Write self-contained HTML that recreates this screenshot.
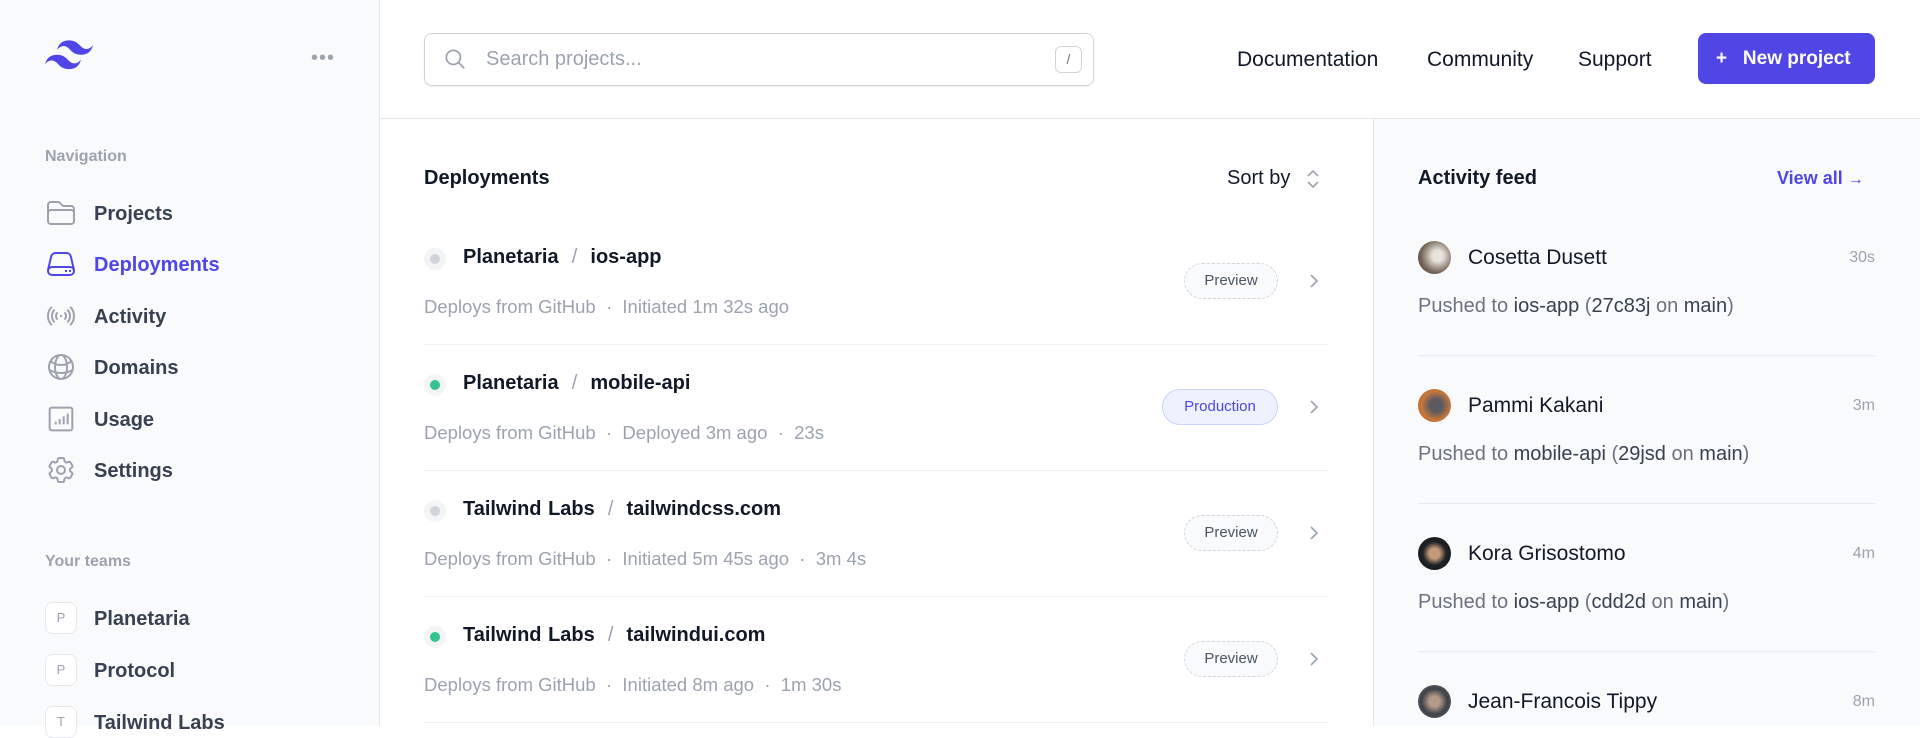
<!DOCTYPE html>
<html><head><meta charset="utf-8"><style>
*{box-sizing:border-box;margin:0;padding:0}
body{width:1920px;height:726px;overflow:hidden;font-family:"Liberation Sans",sans-serif;background:#fff;color:#111827;position:relative}
.a{position:absolute;white-space:nowrap}
.side{position:absolute;left:0;top:0;width:380px;height:726px;background:#f9fafb;border-right:1px solid #e5e7eb}
.lbl{font-size:16px;color:#9ca3af;font-weight:600}
.nav{font-size:20px;font-weight:700;color:#374151;line-height:24px}
.ic{position:absolute;left:45px;width:32px;height:32px}
.team{position:absolute;left:45px;width:32px;height:32px;border:1px solid #e5e7eb;border-radius:8px;background:#fff;font-size:13px;color:#9ca3af;text-align:center;line-height:30px}
.rname{font-size:20px;font-weight:700;color:#111827;word-spacing:1px}
.sub{font-size:18.5px;color:#9ca3af}
.dot{position:absolute;width:22px;height:22px;border-radius:50%;background:#f3f4f6}
.dot i{position:absolute;left:6px;top:6px;width:10px;height:10px;border-radius:50%}
.badge{position:absolute;height:36px;border-radius:18px;font-size:15px;line-height:34px;text-align:center}
.pv{border:1px dashed #d1d5db;color:#4b5563;background:#f9fafb}
.pd{border:1px solid #c7d2fe;background:#eef2ff;color:#4f46e5}
.hr{position:absolute;height:1px;background:#f0f1f3}
.av{position:absolute;left:1418px;width:33px;height:33px;border-radius:50%}
.fn{font-size:21px;color:#111827}
.ft{font-size:20px;color:#6b7280}
.ft b{font-weight:400;color:#374151}
.tm{font-size:16px;color:#9ca3af;right:45px}
.hl{font-size:21px;color:#111827;top:48px}
</style></head><body>
<div class="side">
<svg class="a" style="left:45px;top:40px" width="48" height="30" viewBox="0 0 54 33"><path fill="#4f46e5" d="M27 0c-7.2 0-11.7 3.6-13.5 10.8 2.7-3.6 5.850-4.95 9.45-4.05 2.054.513 3.522 2.004 5.147 3.653C30.744 13.09 33.808 16.2 40.5 16.2c7.2 0 11.7-3.6 13.5-10.8-2.7 3.6-5.85 4.95-9.45 4.05-2.054-.513-3.522-2.004-5.147-3.653C36.756 3.11 33.692 0 27 0zM13.5 16.2C6.3 16.2 1.8 19.8 0 27c2.7-3.6 5.85-4.95 9.45-4.05 2.054.514 3.522 2.004 5.147 3.653C17.244 29.290 20.308 32.4 27 32.4c7.2 0 11.7-3.6 13.5-10.8-2.7 3.6-5.85 4.95-9.45 4.05-2.054-.513-3.522-2.004-5.147-3.653C23.256 19.31 20.192 16.2 13.5 16.2z"/></svg>
<div class="a" style="left:311px;top:56px;color:#9ca3af;font-size:20px;letter-spacing:1px;line-height:4px">•••</div>
<div class="a lbl" style="left:45px;top:148px">Navigation</div>
<svg class="ic" style="top:197px" viewBox="0 0 24 24" fill="none" stroke="#9ca3af" stroke-width="1.5"><path d="M2.25 12.75V12A2.25 2.25 0 014.5 9.75h15A2.25 2.25 0 0121.75 12v.75m-8.690-6.44l-2.12-2.12a1.5 1.5 0 00-1.061-.44H4.5A2.25 2.25 0 002.25 6v12a2.25 2.25 0 002.25 2.25h15A2.25 2.25 0 0021.75 18V9a2.25 2.25 0 00-2.25-2.25h-5.379a1.5 1.5 0 01-1.06-.44z"/></svg>
<div class="a nav" style="left:94px;top:202px">Projects</div>
<svg class="ic" style="top:248px" viewBox="0 0 24 24" fill="none" stroke="#4f46e5" stroke-width="1.5"><path d="M21.75 17.25v-.228a4.5 4.5 0 00-.12-1.030l-2.268-9.64a3.375 3.375 0 00-3.285-2.602H7.923a3.375 3.375 0 00-3.285 2.602l-2.268 9.64a4.5 4.5 0 00-.12 1.03v.228m19.5 0a3 3 0 01-3 3H5.25a3 3 0 01-3-3m19.5 0a3 3 0 00-3-3H5.25a3 3 0 00-3 3m16.5 0h.008v.008h-.008v-.008zm-3 0h.008v.008h-.008v-.008z"/></svg>
<div class="a nav" style="left:94px;top:253px;color:#4f46e5">Deployments</div>
<svg class="ic" style="top:300px" viewBox="0 0 24 24" fill="none" stroke="#9ca3af" stroke-width="1.5"><path d="M9.348 14.651a3.75 3.75 0 010-5.303m5.304 0a3.75 3.75 0 010 5.303m-7.425 2.122a6.75 6.75 0 010-9.546m9.546 0a6.75 6.75 0 010 9.546M5.106 18.894c-3.808-3.808-3.808-9.98 0-13.789m13.788 0c3.808 3.808 3.808 9.981 0 13.79M12 12h.008v.007H12V12z"/></svg>
<div class="a nav" style="left:94px;top:305px">Activity</div>
<svg class="ic" style="top:351px" viewBox="0 0 24 24" fill="none" stroke="#9ca3af" stroke-width="1.5"><path d="M12 21a9.004 9.004 0 008.716-6.747M12 21a9.004 9.004 0 01-8.716-6.747M12 21c2.485 0 4.5-4.03 4.5-9S14.485 3 12 3m0 18c-2.485 0-4.5-4.03-4.5-9S9.515 3 12 3m0 0a8.997 8.997 0 017.843 4.582M12 3a8.997 8.997 0 00-7.843 4.582m15.686 0A11.953 11.953 0 0112 10.5c-2.998 0-5.740-1.1-7.843-2.918m15.686 0A8.959 8.959 0 0121 12c0 .778-.099 1.533-.284 2.253m0 0A17.919 17.919 0 0112 16.5c-3.162 0-6.133-.815-8.716-2.247m0 0A9.015 9.015 0 013 12c0-1.605.42-3.113 1.157-4.418"/></svg>
<div class="a nav" style="left:94px;top:356px">Domains</div>
<svg class="ic" style="top:403px" viewBox="0 0 24 24" fill="none" stroke="#9ca3af" stroke-width="1.5"><rect x="3.5" y="3.5" width="17" height="17" rx="1.5"/><path d="M8 16v-2M11 16v-4M14 16v-6M17 16V8"/></svg>
<div class="a nav" style="left:94px;top:408px">Usage</div>
<svg class="ic" style="top:454px" viewBox="0 0 24 24" fill="none" stroke="#9ca3af" stroke-width="1.5"><path d="M9.594 3.94c.09-.542.56-.94 1.11-.94h2.593c.55 0 1.02.398 1.11.94l.213 1.281c.063.374.313.686.645.87.074.04.147.083.22.127.324.196.72.257 1.075.124l1.217-.456a1.125 1.125 0 011.37.49l1.296 2.247a1.125 1.125 0 01-.26 1.431l-1.003.827c-.293.24-.438.613-.431.992a6.759 6.759 0 010 .255c-.007.378.138.75.43.99l1.005.828c.424.35.534.954.26 1.43l-1.298 2.247a1.125 1.125 0 01-1.369.491l-1.217-.456c-.355-.133-.75-.072-1.076.124a6.57 6.57 0 01-.22.128c-.331.183-.581.495-.644.869l-.213 1.28c-.09.543-.56.941-1.11.941h-2.594c-.55 0-1.02-.398-1.11-.94l-.213-1.281c-.062-.374-.312-.686-.644-.87a6.52 6.52 0 01-.22-.127c-.325-.196-.72-.257-1.076-.124l-1.217.456a1.125 1.125 0 01-1.369-.49l-1.297-2.247a1.125 1.125 0 01.26-1.431l1.004-.827c.292-.24.437-.613.43-.992a6.932 6.932 0 010-.255c.007-.378-.138-.75-.43-.99l-1.004-.828a1.125 1.125 0 01-.26-1.43l1.297-2.247a1.125 1.125 0 011.37-.491l1.216.456c.356.133.751.072 1.076-.124.072-.044.146-.087.22-.128.332-.183.582-.495.644-.869l.214-1.281z"/><circle cx="12" cy="12" r="3"/></svg>
<div class="a nav" style="left:94px;top:459px">Settings</div>
<div class="a lbl" style="left:45px;top:553px">Your teams</div>
<div class="team" style="top:602px">P</div><div class="a nav" style="left:94px;top:607px">Planetaria</div>
<div class="team" style="top:654px">P</div><div class="a nav" style="left:94px;top:659px">Protocol</div>
<div class="team" style="top:706px">T</div><div class="a nav" style="left:94px;top:711px">Tailwind Labs</div>
</div>
<!-- header -->
<div class="a" style="left:380px;top:118px;width:1540px;height:1px;background:#e5e7eb"></div>
<div class="a" style="left:424px;top:33px;width:670px;height:53px;border:1px solid #d1d5db;border-radius:8px;box-shadow:0 1px 2px rgba(0,0,0,.06)"></div>
<svg class="a" style="left:442px;top:46px" width="26" height="26" viewBox="0 0 24 24" fill="none" stroke="#9ca3af" stroke-width="1.6"><circle cx="10.5" cy="10.5" r="6.5"/><path d="M15.5 15.5l5 5"/></svg>
<div class="a" style="left:486px;top:48px;font-size:20px;color:#9ca3af">Search projects...</div>
<div class="a" style="left:1055px;top:46px;width:27px;height:27px;border:1px solid #d1d5db;border-radius:6px;font-size:14px;color:#6b7280;text-align:center;line-height:25px">/</div>
<div class="a hl" style="left:1237px">Documentation</div>
<div class="a hl" style="left:1427px">Community</div>
<div class="a hl" style="left:1578px">Support</div>
<div class="a" style="left:1698px;top:33px;width:177px;height:51px;background:#4f46e5;border-radius:8px;color:#fff;font-size:19px;font-weight:600;line-height:51px;padding-left:18px">+&nbsp;&nbsp; New project</div>
<!-- main -->
<div class="a" style="left:424px;top:167px;font-size:20px;font-weight:700">Deployments</div>
<div class="a" style="left:1227px;top:167px;font-size:20px">Sort by</div>
<svg class="a" style="left:1304px;top:167px" width="18" height="24" viewBox="0 0 18 24" fill="none" stroke="#9ca3af" stroke-width="1.6"><path d="M4 9l5-5 5 5M4 15l5 5 5-5"/></svg>

<div class="dot" style="left:424px;top:248px"><i style="background:#d1d5db"></i></div>
<div class="a rname" style="left:463px;top:246px">Planetaria &nbsp;<span style="color:#9ca3af;font-weight:400">/</span>&nbsp; ios-app</div>
<div class="a sub" style="left:424px;top:296px">Deploys from GitHub &nbsp;·&nbsp; Initiated 1m 32s ago</div>
<div class="badge pv" style="left:1184px;top:263px;width:94px">Preview</div>
<div class="hr" style="left:424px;top:344px;width:904px"></div>

<div class="dot" style="left:424px;top:374px"><i style="background:#34c38f"></i></div>
<div class="a rname" style="left:463px;top:372px">Planetaria &nbsp;<span style="color:#9ca3af;font-weight:400">/</span>&nbsp; mobile-api</div>
<div class="a sub" style="left:424px;top:422px">Deploys from GitHub &nbsp;·&nbsp; Deployed 3m ago &nbsp;·&nbsp; 23s</div>
<div class="badge pd" style="left:1162px;top:389px;width:116px">Production</div>
<div class="hr" style="left:424px;top:470px;width:904px"></div>

<div class="dot" style="left:424px;top:500px"><i style="background:#d1d5db"></i></div>
<div class="a rname" style="left:463px;top:498px">Tailwind Labs &nbsp;<span style="color:#9ca3af;font-weight:400">/</span>&nbsp; tailwindcss.com</div>
<div class="a sub" style="left:424px;top:548px">Deploys from GitHub &nbsp;·&nbsp; Initiated 5m 45s ago &nbsp;·&nbsp; 3m 4s</div>
<div class="badge pv" style="left:1184px;top:515px;width:94px">Preview</div>
<div class="hr" style="left:424px;top:596px;width:904px"></div>

<div class="dot" style="left:424px;top:626px"><i style="background:#34c38f"></i></div>
<div class="a rname" style="left:463px;top:624px">Tailwind Labs &nbsp;<span style="color:#9ca3af;font-weight:400">/</span>&nbsp; tailwindui.com</div>
<div class="a sub" style="left:424px;top:674px">Deploys from GitHub &nbsp;·&nbsp; Initiated 8m ago &nbsp;·&nbsp; 1m 30s</div>
<div class="badge pv" style="left:1184px;top:641px;width:94px">Preview</div>
<div class="hr" style="left:424px;top:722px;width:904px"></div>

<svg class="a" style="left:1306px;top:272px" width="16" height="18" viewBox="0 0 16 18" fill="none" stroke="#9ca3af" stroke-width="1.6"><path d="M5 3l6 6-6 6"/></svg>
<svg class="a" style="left:1306px;top:398px" width="16" height="18" viewBox="0 0 16 18" fill="none" stroke="#9ca3af" stroke-width="1.6"><path d="M5 3l6 6-6 6"/></svg>
<svg class="a" style="left:1306px;top:524px" width="16" height="18" viewBox="0 0 16 18" fill="none" stroke="#9ca3af" stroke-width="1.6"><path d="M5 3l6 6-6 6"/></svg>
<svg class="a" style="left:1306px;top:650px" width="16" height="18" viewBox="0 0 16 18" fill="none" stroke="#9ca3af" stroke-width="1.6"><path d="M5 3l6 6-6 6"/></svg>
<!-- right -->
<div class="a" style="left:1373px;top:119px;width:547px;height:607px;background:#f9fafb;border-left:1px solid #e5e7eb"></div>
<div class="a" style="left:1418px;top:167px;font-size:20px;font-weight:700">Activity feed</div>
<div class="a" style="left:1777px;top:168px;font-size:18px;font-weight:700;color:#4f46e5">View all <span style="font-size:16px">→</span></div>

<div class="av" style="top:241px;background:radial-gradient(circle at 60% 45%,#e8e2dc 20%,#7a6a5e 60%,#3b302a)"></div>
<div class="a fn" style="left:1468px;top:246px">Cosetta Dusett</div><div class="a tm" style="top:249px">30s</div>
<div class="a ft" style="left:1418px;top:295px">Pushed to <b>ios-app</b> (<b>27c83j</b> on <b>main</b>)</div>
<div class="hr" style="left:1418px;top:355px;width:457px;background:#e9eaec"></div>

<div class="av" style="top:389px;background:radial-gradient(circle at 55% 50%,#5a5a60 25%,#c9773a 60%,#a0582a)"></div>
<div class="a fn" style="left:1468px;top:394px">Pammi Kakani</div><div class="a tm" style="top:397px">3m</div>
<div class="a ft" style="left:1418px;top:443px">Pushed to <b>mobile-api</b> (<b>29jsd</b> on <b>main</b>)</div>
<div class="hr" style="left:1418px;top:503px;width:457px;background:#e9eaec"></div>

<div class="av" style="top:537px;background:radial-gradient(circle at 50% 50%,#c49a7a 22%,#1f2226 50%,#0f1114)"></div>
<div class="a fn" style="left:1468px;top:542px">Kora Grisostomo</div><div class="a tm" style="top:545px">4m</div>
<div class="a ft" style="left:1418px;top:591px">Pushed to <b>ios-app</b> (<b>cdd2d</b> on <b>main</b>)</div>
<div class="hr" style="left:1418px;top:651px;width:457px;background:#e9eaec"></div>

<div class="av" style="top:685px;background:radial-gradient(circle at 50% 50%,#b59a88 22%,#3d4248 55%,#6b7177)"></div>
<div class="a fn" style="left:1468px;top:690px">Jean-Francois Tippy</div><div class="a tm" style="top:693px">8m</div>
</body></html>
